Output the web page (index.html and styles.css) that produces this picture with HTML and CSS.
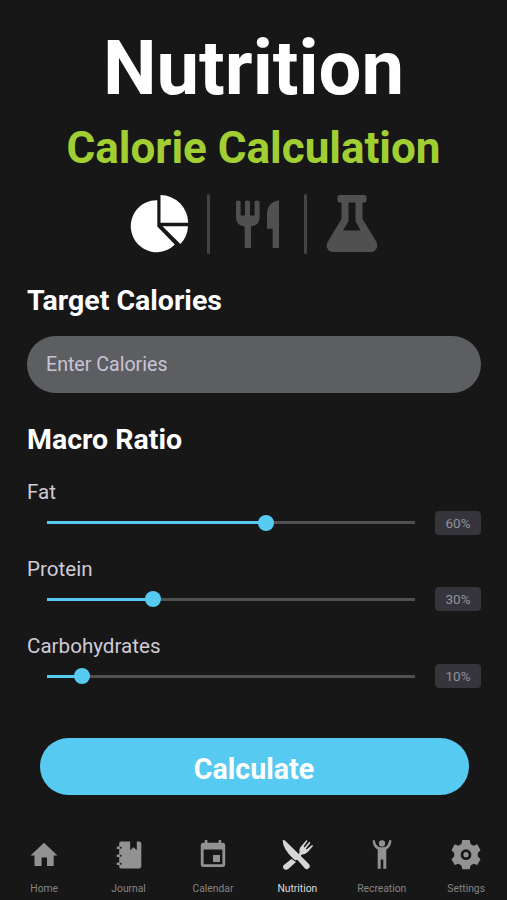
FILE: index.html
```html
<!DOCTYPE html>
<html lang="en">
<head>
<meta charset="utf-8">
<title>Nutrition</title>
<link rel="stylesheet" href="styles.css">
</head>
<body>
<div class="app">
  <main class="content">
    <h1 class="title">Nutrition</h1>
    <h2 class="subtitle">Calorie Calculation</h2>
    <div class="tabs">
      <svg class="tab tab-active" viewBox="130 194 60 60" width="60" height="60">
        <path d="M157.300 200.200V226.500L174.800 244.600A25.800 26 0 1 1 157.300 200.200Z"/>
        <path d="M160.500 195A28 28 0 0 1 188.200 222.800H160.500Z"/>
        <path d="M162.500 226.200H188A27 27 0 0 1 180.400 244Z"/>
      </svg>
      <span class="divider"></span>
      <svg class="tab" viewBox="227 194 60 60" width="60" height="60">
        <path d="M236 202Q236 200.500 238.300 200.500Q240.600 200.500 240.600 202V215.500H245V202Q245 200.500 247.500 200.500Q250 200.500 250 202V215.500H254.600V202Q254.600 200.500 257 200.500Q259.600 200.500 259.600 202V217Q259.600 225.500 251 226.500V248H244.700V226.500Q236 225.500 236 217Z"/>
        <path d="M279 200.300V248H272.700V228.800H267V213Q267.500 202 279 200.300Z"/>
      </svg>
      <span class="divider"></span>
      <svg class="tab" viewBox="324 194 60 60" width="60" height="60">
        <path fill-rule="evenodd" d="M339.500 195H364.500Q366.500 195 366.500 197V200.500Q366.500 202.500 364.500 202.500H362.500V219L376.200 241.500Q379 247 374.500 251Q373.500 252 371 252H333Q330 252 328.500 250.300Q325 246.500 328 241.500L341.500 219V202.500H339.500Q337.500 202.500 337.500 200.500V197Q337.500 195 339.500 195ZM348.500 202.500V221L343 230.500H360.500L355.500 221V202.500Z"/>
      </svg>
    </div>
    <label class="heading" for="calories">Target Calories</label>
    <input class="calories" id="calories" type="text" placeholder="Enter Calories">
    <h3 class="heading heading-macro">Macro Ratio</h3>
    <section class="macro">
      <div class="macro-name">Fat</div>
      <div class="macro-row">
        <div class="track"><div class="fill" style="width:59.4%"></div><div class="thumb"></div></div>
        <span class="value">60%</span>
      </div>
    </section>
    <section class="macro">
      <div class="macro-name">Protein</div>
      <div class="macro-row">
        <div class="track"><div class="fill" style="width:28.9%"></div><div class="thumb"></div></div>
        <span class="value">30%</span>
      </div>
    </section>
    <section class="macro">
      <div class="macro-name">Carbohydrates</div>
      <div class="macro-row">
        <div class="track"><div class="fill" style="width:9.4%"></div><div class="thumb"></div></div>
        <span class="value">10%</span>
      </div>
    </section>
    <button class="calculate" type="button">Calculate</button>
  </main>
  <nav class="nav">
    <a class="nav-item">
      <svg viewBox="0 0 34 34" width="34" height="34"><path d="M17 4.800L30.500 17.600H26.700V28H20V19.500H14.600V28H7.500V17.600H3.500Z"/></svg>
      <span>Home</span>
    </a>
    <a class="nav-item">
      <svg viewBox="0 0 34 34" width="34" height="34"><path d="M9 3.500H18.200V12.200L21.500 9.200L24.800 12.200V3.500H27Q29.300 3.500 29.300 5.500V28.500Q29.300 30.600 27 30.600H9Q7.200 30.600 7.200 28.500V27H5.500Q4.500 27 4.500 26T5.500 24.500H7.200V19H5.500Q4.500 19 4.500 18T5.500 16.500H7.200V11H5.500Q4.500 11 4.500 10T5.500 8.500H7.200V5.500Q7.200 3.500 9 3.500Z"/><g class="holes"><circle cx="8.700" cy="9.700" r="1"/><circle cx="8.700" cy="17.700" r="1"/><circle cx="8.700" cy="25.700" r="1"/></g></svg>
      <span>Journal</span>
    </a>
    <a class="nav-item">
      <svg viewBox="0 0 34 34" width="34" height="34"><path fill-rule="evenodd" d="M8.800 2H11.400V4.800H22.600V2H25.200V4.800H26.500Q29.200 4.800 29.200 7.500V26.500Q29.200 29 26.500 29H7.500Q4.800 29 4.800 26.500V7.500Q4.800 4.800 7.500 4.800H8.800ZM7.600 11.500V26.300H26.400V11.500ZM17 17H24V24H17Z"/></svg>
      <span>Calendar</span>
    </a>
    <a class="nav-item nav-active">
      <svg viewBox="0 0 34 34" width="34" height="34">
        <path d="M2.700 2.500Q3.700 1.300 5.500 3L29.200 26.300Q30.800 28.200 29 30.300Q26.700 32 24.800 30.200L17.300 21.800Q15 23 12.800 20.300Q2.800 10.500 2.700 2.500Z"/>
        <path d="M18.500 16.200L19.600 14.500Q18.600 10.500 22 7.300L26.200 2.500Q27 1.900 27.500 2.900L23.600 8.600L24.500 9.500L29.200 4.100Q30.200 3.800 30.300 4.900L25.800 10.800L26.600 11.600L32 7Q33 7 32.900 8.100L28.300 13.400Q25 16.700 21.700 16.400L20.500 18.200Z"/>
        <path d="M11.500 21L16 24L8.300 31.100Q6 32.500 4 30.900Q2 28.800 3.800 26.900Z"/>
      </svg>
      <span>Nutrition</span>
    </a>
    <a class="nav-item">
      <svg viewBox="0 0 34 34" width="34" height="34"><circle cx="17" cy="5.400" r="3.100"/><path d="M7.600 2.500L9.700 2Q10.800 8.500 15 9.300H19Q23.200 8.500 24.300 2L26.500 2.500Q25.800 9.500 21.300 11.600V30.800H18.300V21.500H15.700V30.800H12.700V11.600Q8.200 9.500 7.600 2.500Z"/></svg>
      <span>Recreation</span>
    </a>
    <a class="nav-item">
      <svg viewBox="0 0 34 34" width="34" height="34"><path fill-rule="evenodd" stroke-linejoin="round" d="M13.300 2H20.700L21.600 6L24.600 7.700L28.300 6.300L31.500 12.200L28.800 15V18.300L31.500 21.200L28.300 27L24.600 25.800L21.600 27.500L20.700 31.300H13.300L12.400 27.500L9.400 25.800L5.700 27L2.500 21.200L5.200 18.300V15L2.500 12.200L5.700 6.300L9.400 7.700L12.400 6ZM17 11.300A5.400 5.400 0 1 0 17 22.100A5.400 5.400 0 1 0 17 11.300ZM17 14.100A2.600 2.600 0 1 1 17 19.300A2.600 2.600 0 1 1 17 14.100Z"/></svg>
      <span>Settings</span>
    </a>
  </nav>
</div>
</body>
</html>
```
FILE: styles.css
```css
* { box-sizing: border-box; }
body {
  margin: 0;
  background: #171717;
  color: #fff;
  font-family: Roboto, "Liberation Sans", sans-serif;
}
.app {
  width: 507px;
  height: 900px;
  padding-top: 24px;
  display: flex;
  flex-direction: column;
  justify-content: space-between;
  overflow: hidden;
}
.content {
  display: flex;
  flex-direction: column;
  padding: 0 26px;
}
.title, .subtitle, .heading { margin: 0; font-weight: 700; white-space: nowrap; }
.title { font-size: 76px; line-height: 88px; height: 90px; text-align: center; }
.subtitle { font-size: 44px; line-height: 68px; text-align: center; color: #a1cf33; }
.tabs {
  display: flex;
  align-items: center;
  height: 83px;
  padding: 0 0 0 104px;
}
.tab { fill: #505051; }
.tab-active { fill: #fff; }
.divider { width: 3px; height: 60px; margin: 0 17px; border-radius: 2px; background: #444445; }
.heading { font-size: 28.500px; line-height: 71px; padding-left: 1px; }
.calories {
  height: 57px;
  margin-left: 0.500px;
  padding: 0 19.500px;
  border: 0;
  border-radius: 29px;
  background: #5d5e62;
  color: #fff;
  font: 19.600px Roboto, "Liberation Sans", sans-serif;
}
.calories::placeholder { color: #c9c4d6; opacity: 1; }
.heading-macro { line-height: 94px; height: 87px; }
.macro { margin-bottom: 15.800px; }
.macro-name { font-size: 20.600px; line-height: 24px; color: #cfcbd8; padding-left: 1px; }
.macro-row {
  display: flex;
  align-items: center;
  justify-content: space-between;
  height: 37px;
  padding-left: 21px;
}
.track {
  display: flex;
  align-items: center;
  width: 368px;
  height: 3px;
  background: #505051;
}
.fill { height: 3px; background: #56caf1; }
.thumb { flex: none; width: 16px; height: 16px; margin-left: -8px; border-radius: 50%; background: #56caf1; }
.value {
  width: 46px;
  height: 24px;
  border-radius: 4px;
  background: #35353b;
  color: #929298;
  font-size: 13.500px;
  line-height: 25px;
  text-align: center;
}
.calculate {
  height: 57px;
  margin: 28px 12.500px 0 13.500px;
  padding: 4px 0 0;
  border: 0;
  border-radius: 29px;
  background: #56caf1;
  color: #fff;
  font: 700 28.600px Roboto, "Liberation Sans", sans-serif;
}
.nav { display: grid; grid-template-columns: repeat(6, 84.400px); padding-left: 2px; height: 62px; }
.nav-item {
  display: flex;
  flex-direction: column;
  align-items: center;
  gap: 9px;
  color: #858585;
  fill: #929292;
  font-size: 10.300px;
  line-height: 15px;
}
.nav-active { color: #dcdcdc; fill: #d6d6d6; }
.holes { fill: #171717; }
```
